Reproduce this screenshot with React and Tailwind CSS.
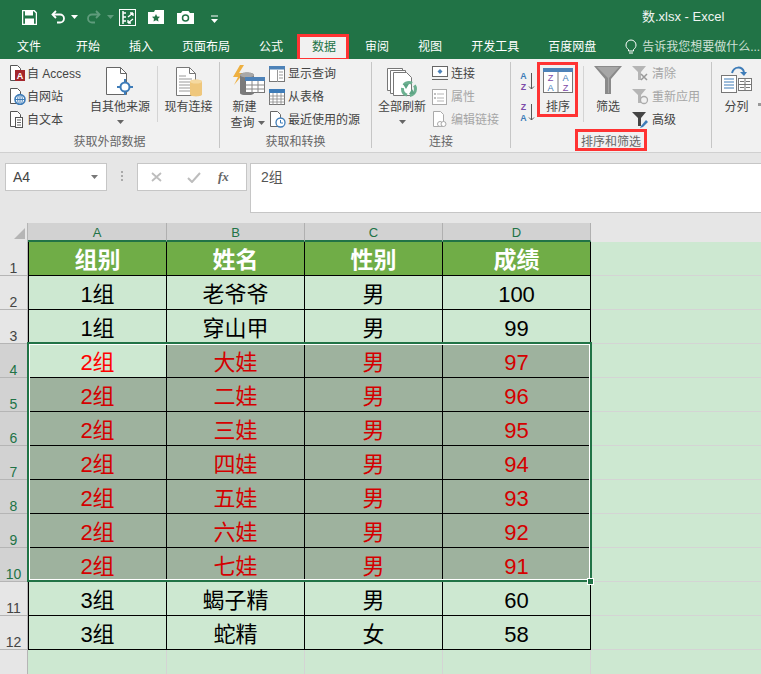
const Tri = ({ c = "#666", className = "" }) => (
  <svg width="7" height="4" viewBox="0 0 7 4" className={className}><path d="M0 0h7L3.500 4z" fill={c} /></svg>
);
const IconAccess = () => (
  <svg width="17" height="17" viewBox="0 0 17 17"><path d="M1.500.5h7l3 3v12h-10z" fill="#fff" stroke="#555" /><rect x="6" y="5" width="10" height="11" fill="#a4262c" /><text x="11" y="14" textAnchor="middle" fontSize="9" fontWeight="700" fill="#fff" fontFamily="Liberation Sans">A</text></svg>
);
const IconWeb = () => (
  <svg width="17" height="17" viewBox="0 0 17 17"><path d="M1.500.5h7l3 3v12h-10z" fill="#fff" stroke="#555" /><circle cx="11" cy="11.500" r="5" fill="#fff" stroke="#3e7cb8" strokeWidth="1.600" /><path d="M6 11.500h10M11 6.500v10" stroke="#3e7cb8" /><ellipse cx="11" cy="11.500" rx="2.300" ry="5" fill="none" stroke="#3e7cb8" /></svg>
);
const IconText = () => (
  <svg width="17" height="17" viewBox="0 0 17 17"><path d="M1.500.5h7l3 3v12h-10z" fill="#fff" stroke="#555" /><rect x="6.500" y="6.500" width="7" height="10" fill="#fff" stroke="#555" /><path d="M8 9h4M8 11.500h4M8 14h4" stroke="#666" /></svg>
);
const IconOther = () => (
  <svg width="30" height="30" viewBox="0 0 30 30"><path d="M1.500.5h14l6 6v21h-20z" fill="#fff" stroke="#666" /><path d="M15.500.5v6h6" fill="none" stroke="#666" /><circle cx="20" cy="20" r="4.500" fill="#fff" stroke="#3e7cb8" strokeWidth="2" /><path d="M20 12v4M20 24v4M12 20h4M24 20h4" stroke="#3e7cb8" strokeWidth="2" /></svg>
);
const IconExisting = () => (
  <svg width="28" height="30" viewBox="0 0 28 30"><path d="M1.500.5h13l6 6v22h-19z" fill="#fff" stroke="#777" /><path d="M14.500.5v6h6" fill="none" stroke="#777" /><path d="M4 9h7M4 12h13M4 15h13M4 18h13M4 21h13M4 24h13" stroke="#999" /><path d="M15 14.500c0-2.500 12-2.500 12 0v13c0 2.500-12 2.500-12 0z" fill="#efc77c" /><ellipse cx="21" cy="14.500" rx="6" ry="2" fill="#f5d9a0" /></svg>
);
const TableMini = ({ w = 16, h = 16, head = "#3e7cb8", rows = 3, cols = 3 }) => (
  <svg width={w} height={h} viewBox="0 0 16 16" className="shrink-0"><rect x=".5" y=".5" width="15" height="15" fill="#fff" stroke="#777" /><rect x="0" y="0" width="16" height="4" fill={head} />
    {Array.from({ length: rows - 1 }).map((_, i) => <path key={i} d={`M0 ${4 + ((i + 1) * 12) / rows}h16`} stroke="#888" strokeWidth=".8" />)}
    {Array.from({ length: cols - 1 }).map((_, i) => <path key={i} d={`M${((i + 1) * 16) / cols} 4v12`} stroke="#888" strokeWidth=".8" />)}
  </svg>
);
const IconQuery = () => (
  <svg width="34" height="30" viewBox="0 0 34 30"><path d="M9 0L2 12h5L3 20l10-12H8l5-8z" fill="#eeb041" /><path d="M9 10c0-3.500 14-3.500 14 0v18c0 3-14 3-14 0z" fill="#7b7b7b" /><ellipse cx="16" cy="10" rx="7" ry="2.500" fill="#a8a8a8" /><rect x="14.500" y="12.500" width="19" height="15" fill="#fff" stroke="#777" /><rect x="14" y="12" width="20" height="4" fill="#4d82b8" /><path d="M14.500 20h19M14.500 24h19M21 16v12M27 16v12" stroke="#888" /></svg>
);
const IconShowQuery = () => (
  <svg width="16" height="16" viewBox="0 0 16 16" className="shrink-0"><rect x=".5" y=".5" width="15" height="15" fill="#fff" stroke="#777" /><rect width="16" height="3.500" fill="#4d82b8" /><path d="M10 6h4M10 9h4M10 12h4" stroke="#999" /><path d="M8.500 4v12" stroke="#999" /></svg>
);
const IconRecent = () => (
  <svg width="17" height="17" viewBox="0 0 17 17" className="shrink-0"><path d="M1.500.5h7l3 3v12h-10z" fill="#fff" stroke="#666" /><circle cx="11.500" cy="11.500" r="4.500" fill="#fff" stroke="#3e7cb8" strokeWidth="1.300" /><path d="M11.500 9v3h2.500" fill="none" stroke="#3e7cb8" /></svg>
);
const IconRefresh = () => (
  <svg width="32" height="31" viewBox="0 0 32 31"><path d="M1.500 1.500h15v22h-15z" fill="#fff" stroke="#777" /><path d="M4.500 3.500h15v23h-15z" fill="#fff" stroke="#777" /><path d="M7.500 5.500h13l5 5v18h-18z" fill="#fff" stroke="#777" /><circle cx="23" cy="22" r="6.500" fill="none" stroke="#6cb090" strokeWidth="3" strokeDasharray="9 3" /><path d="M17 17l3 5 3-5zM29 27l-3-5-3 5z" fill="#5ea585" /></svg>
);
const IconConn = () => (
  <svg width="16" height="15" viewBox="0 0 16 15" className="shrink-0"><rect x=".5" y=".5" width="15" height="10" fill="#fff" stroke="#666" /><path d="M0 13.500h16" stroke="#666" /><path d="M8 3l2.500 2.500L8 8 5.500 5.500z" fill="#4d82b8" /></svg>
);
const IconProps = () => (
  <svg width="15" height="16" viewBox="0 0 15 16" className="shrink-0"><rect x=".5" y=".5" width="14" height="15" fill="#fff" stroke="#aaa" /><path d="M5 5h7M5 9h7M5 12h7" stroke="#b5b5b5" /><circle cx="3" cy="5" r="1" fill="#aaa" /><circle cx="3" cy="9" r="1" fill="#aaa" /></svg>
);
const IconEditLink = () => (
  <svg width="15" height="17" viewBox="0 0 15 17" className="shrink-0"><path d="M1.500.5h7l3 3v12h-10z" fill="#fff" stroke="#aaa" /><circle cx="8" cy="13" r="2.500" fill="#fff" stroke="#aaa" /><circle cx="11.500" cy="13" r="2.500" fill="#fff" stroke="#aaa" /></svg>
);
const Letters = ({ a, b, ca, cb }) => (
  <svg width="16" height="20" viewBox="0 0 16 20" className="shrink-0">
    <text x="4.500" y="8" textAnchor="middle" fontSize="8.800" fontWeight="700" fontFamily="Liberation Sans" fill={ca}>{a}</text>
    <text x="4.500" y="18.500" textAnchor="middle" fontSize="8.800" fontWeight="700" fontFamily="Liberation Sans" fill={cb}>{b}</text>
    <path d="M12.500 2v16M10 15.500l2.500 2.500 2.500-2.500" fill="none" stroke="#555" />
  </svg>
);
const IconSort = () => (
  <svg width="30" height="25" viewBox="0 0 30 25"><rect x=".5" y=".5" width="29" height="24" fill="#fff" stroke="#777" /><rect width="30" height="4" fill="#4d82b8" /><path d="M15 4v21" stroke="#777" />
    <g fontFamily="Liberation Sans" fontSize="9.200" textAnchor="middle"><text x="7.500" y="12.500" fill="#7d4ba8">Z</text><text x="7.500" y="23.300" fill="#3e7cb8">A</text><text x="22.500" y="12.500" fill="#3e7cb8">A</text><text x="22.500" y="23.300" fill="#7d4ba8">Z</text></g></svg>
);
const IconFunnel = () => (
  <svg width="28" height="28" viewBox="0 0 28 28"><path d="M0 0h28L17 13v15h-6V13z" fill="#8a8a8a" /><path d="M3 1h22L15 12v15h-1V12z" fill="#a6a6a6" /></svg>
);
const MiniFunnel = ({ children, c = "#b5b5b5" }) => (
  <svg width="17" height="17" viewBox="0 0 17 17" className="shrink-0"><path d="M0 1h14L9 7v8H6V7z" fill={c} />{children}</svg>
);
const IconSplit = () => (
  <svg width="31" height="27" viewBox="0 0 31 27"><path d="M11 7C13 0 21 0 23 6" fill="none" stroke="#3e7cb8" strokeWidth="2" /><path d="M19 6h7l-3 4z" fill="#3e7cb8" /><rect x=".5" y="9.500" width="15" height="17" fill="#fff" stroke="#777" /><path d="M3 13h10M3 16h10M3 19h10M3 22h10" stroke="#3e7cb8" /><rect x="17.500" y="12.500" width="13" height="12" fill="#fff" stroke="#777" /><path d="M17.500 18.500h13M24 12.500v12" stroke="#777" /><path d="M19 15.500h4M25 15.500h4M19 21.500h4M25 21.500h4" stroke="#777" /></svg>
);

const Small = ({ icon, children, dim, gap = "gap-[3px]" }) => (
  <div className={`flex items-center h-[23px] ${gap} whitespace-nowrap ${dim ? "text-[#a6a6a6]" : ""}`}>{icon}<span className="pt-[1px]">{children}</span></div>
);
const Group = ({ w, label, children }) => (
  <div className={`${w} h-[86px] border-r border-[#c6c6c6] flex flex-col`}>
    <div className="flex h-[74px]">{children}</div>
    <div className="mt-[2px] h-[12px] leading-[12px] text-center text-[#666]">{label}</div>
  </div>
);
const Divider = ({ cls }) => <div className={`w-px h-[56px] mt-[4px] bg-[#d4d4d4] ${cls}`} />;

const tabs = ["开始", "插入", "页面布局", "公式", "数据", "审阅", "视图", "开发工具", "百度网盘"];
const data = [
  ["1组", "老爷爷", "男", "100"],
  ["1组", "穿山甲", "男", "99"],
  ["2组", "大娃", "男", "97"],
  ["2组", "二娃", "男", "96"],
  ["2组", "三娃", "男", "95"],
  ["2组", "四娃", "男", "94"],
  ["2组", "五娃", "男", "93"],
  ["2组", "六娃", "男", "92"],
  ["2组", "七娃", "男", "91"],
  ["3组", "蝎子精", "男", "60"],
  ["3组", "蛇精", "女", "58"],
];

const RowHead = ({ n, sel }) => (
  <div className={`${sel ? "bg-[#d2d2d2] text-[#217346]" : "bg-[#e6e6e6] text-[#444]"} border-r border-b border-[#b5b5b5] flex items-end justify-center text-[14px] leading-[14px]`}>{n}</div>
);
const Blank = () => <div className="bg-[#cde8d1] border-b border-[#d4d4d4]" />;

export default function App() {
  return (
    <div className="relative w-[761px] h-[674px] overflow-hidden bg-[#e6e6e6] text-[12px] text-[#444] font-['Liberation_Sans','Noto_Sans_CJK_SC',sans-serif]">
      {/* Title bar */}
      <div className="h-[34px] bg-[#217346] flex items-center text-white relative">
        <div className="flex items-center pl-[22px]">
          <svg width="15" height="15" viewBox="0 0 15 15"><path d="M.5.5h11.500l2.500 2.500v11.500H.5z" fill="none" stroke="#fff" strokeWidth="1.500" /><rect x="3" y="1" width="8" height="4.500" fill="#fff" /><rect x="3" y="8.500" width="9" height="5.500" fill="#fff" /></svg>
          <svg width="15" height="14" viewBox="0 0 15 14" className="ml-[14px]"><path d="M5 1L1.500 4.500 5 8" fill="none" stroke="#fff" strokeWidth="1.800" /><path d="M2 4.500h7a4 4 0 0 1 0 8H6" fill="none" stroke="#fff" strokeWidth="1.800" /></svg>
          <Tri c="#fff" className="ml-[5px]" />
          <svg width="15" height="14" viewBox="0 0 15 14" className="ml-[8px]"><path d="M10 1l3.500 3.500L10 8" fill="none" stroke="#5f9c7c" strokeWidth="1.800" /><path d="M13 4.500H6a4 4 0 0 0 0 8h3" fill="none" stroke="#5f9c7c" strokeWidth="1.800" /></svg>
          <Tri c="#5f9c7c" className="ml-[6px]" />
          <svg width="17" height="17" viewBox="0 0 17 17" className="ml-[5px]"><rect x=".5" y=".5" width="16" height="16" fill="none" stroke="#fff" /><path d="M4 2v13M4 4h3M4 8h3M4 12h3" stroke="#fff" strokeWidth="1.500" /><path d="M9 8l5-4M14 4h-3M14 4v3M14 10l-5 4M9 14h3M9 14v-3" stroke="#fff" strokeWidth="1.300" fill="none" /></svg>
          <svg width="17" height="16" viewBox="0 0 17 16" className="ml-[12px]"><path d="M0 3h6l1-2h9v14H0z" fill="#fff" /><path d="M8 5l1.200 2.500 2.800.3-2 2 .5 2.700L8 11.200 5.500 12.500 6 9.800l-2-2 2.800-.3z" fill="#217346" /></svg>
          <svg width="17" height="14" viewBox="0 0 17 14" className="ml-[12px]"><path d="M0 3h4l1.500-2h6L13 3h4v11H0z" fill="#fff" /><circle cx="8.500" cy="8" r="3" fill="none" stroke="#217346" strokeWidth="1.500" /></svg>
          <svg width="7" height="8" viewBox="0 0 7 8" className="ml-[17px] mt-[3px]"><path d="M0 1h7" stroke="#fff" /><path d="M0 4h7L3.500 8z" fill="#fff" /></svg>
        </div>
        <div className="absolute left-[642px] top-[8px] text-[13px] leading-[17px] text-[#f0f5f2] whitespace-nowrap">数.xlsx - Excel</div>
      </div>
      {/* Tabs */}
      <div className="h-[25px] bg-[#217346] flex items-center pl-[17px] text-white whitespace-nowrap">
        <span className="mr-[35px]">文件</span>
        <div className="flex gap-[29px] items-center">
          {tabs.map((t) => (
            <div key={t} className={`relative ${t === "数据" ? "text-[#217346]" : ""}`}>
              {t === "数据" && <div className="absolute left-[-15px] top-[-4px] w-[52px] h-[27px] bg-[#f1f1f1] border-[3px] border-[#ff3333]" />}
              <span className="relative">{t}</span>
            </div>
          ))}
        </div>
        <svg width="12" height="16" viewBox="0 0 12 16" className="ml-[29px] shrink-0"><path d="M3.500 10.500C2 9.500 1 8 1 6a5 5 0 0 1 10 0c0 2-1 3.500-2.500 4.500v1.500h-5zM4 14h4" fill="none" stroke="#fff" /></svg>
        <span className="ml-[5px] text-[#cfe0d6]">告诉我您想要做什么...</span>
      </div>
      {/* Ribbon */}
      <div className="relative h-[94px] bg-[#f1f1f1] border-b border-[#d0d0d0] pt-[3px] flex">
        <Group w="w-[220px]" label="获取外部数据">
          <div className="w-[88px] pl-[9px]">
            <Small icon={<IconAccess />} gap="gap-[1px]">自 Access</Small>
            <Small icon={<IconWeb />} gap="gap-[1px]">自网站</Small>
            <Small icon={<IconText />} gap="gap-[1px]">自文本</Small>
          </div>
          <div className="w-[64px] flex flex-col items-center pt-[5px]">
            <div className="h-[29px]"><IconOther /></div>
            <div className="mt-[4px] h-[14px] leading-[14px] whitespace-nowrap">自其他来源</div>
            <Tri className="mt-[6px]" />
          </div>
          <Divider cls="ml-[5px]" />
          <div className="w-[61px] flex flex-col items-center pt-[5px]">
            <div className="h-[29px]"><IconExisting /></div>
            <div className="mt-[4px] h-[14px] leading-[14px] whitespace-nowrap">现有连接</div>
          </div>
        </Group>
        <Group w="w-[152px]" label="获取和转换">
          <div className="w-[49px] flex flex-col items-center pt-[3px]">
            <div className="h-[31px] ml-[6px]"><IconQuery /></div>
            <div className="mt-[4px] h-[14px] leading-[14px]">新建</div>
            <div className="mt-[2px] h-[14px] leading-[14px] flex items-center gap-[3px] ml-[6px] whitespace-nowrap">查询<Tri /></div>
          </div>
          <div>
            <Small icon={<IconShowQuery />}>显示查询</Small>
            <Small icon={<TableMini head="#3e7cb8" rows={4} cols={4} />}>从表格</Small>
            <Small icon={<IconRecent />} gap="gap-[2px]">最近使用的源</Small>
          </div>
        </Group>
        <Group w="w-[139px]" label="连接">
          <div className="w-[60px] flex flex-col items-center pt-[5px]">
            <div className="h-[29px]"><IconRefresh /></div>
            <div className="mt-[4px] h-[14px] leading-[14px] whitespace-nowrap">全部刷新</div>
            <Tri className="mt-[6px]" />
          </div>
          <div>
            <Small icon={<IconConn />} gap="gap-[3px]">连接</Small>
            <Small icon={<IconProps />} dim gap="gap-[4px]">属性</Small>
            <Small icon={<IconEditLink />} dim gap="gap-[4px]">编辑链接</Small>
          </div>
        </Group>
        <Group w="w-[201px]" label={
          <span className="relative inline-block">
            <span className="absolute left-[-6px] top-[-7px] w-[72px] h-[22px] border-[3px] border-[#ff3333]" />
            排序和筛选
          </span>
        }>
          <div className="w-[29px] pl-[8px] pt-[9px] flex flex-col gap-[11px]">
            <Letters a="A" b="Z" ca="#3e7cb8" cb="#7d4ba8" />
            <Letters a="Z" b="A" ca="#7d4ba8" cb="#3e7cb8" />
          </div>
          <div className="relative w-[36px] flex flex-col items-center pt-[6px]">
            <div className="absolute left-[-3px] top-0 w-[41px] h-[55px] border-[3px] border-[#ff3333]" />
            <div className="h-[28px]"><IconSort /></div>
            <div className="mt-[4px] h-[14px] leading-[14px] whitespace-nowrap">排序</div>
          </div>
          <Divider cls="ml-[7px]" />
          <div className="w-[48px] flex flex-col items-center pt-[4px]">
            <div className="h-[30px]"><IconFunnel /></div>
            <div className="mt-[4px] h-[14px] leading-[14px] whitespace-nowrap">筛选</div>
          </div>
          <div>
            <Small dim icon={<MiniFunnel><path d="M9 9l6 6M15 9l-6 6" stroke="#999" strokeWidth="1.500" /></MiniFunnel>}>清除</Small>
            <Small dim icon={<MiniFunnel><circle cx="12" cy="12" r="3.500" fill="none" stroke="#aaa" strokeWidth="1.300" /></MiniFunnel>}>重新应用</Small>
            <Small icon={<MiniFunnel c="#444"><path d="M9 15l5-6 2 2-5 5-3 1z" fill="#3e7cb8" /></MiniFunnel>}>高级</Small>
          </div>
        </Group>
        <div className="w-[49px] h-[86px] flex">
          <div className="w-[50px] flex flex-col items-center pt-[4px]">
            <div className="h-[30px]"><IconSplit /></div>
            <div className="mt-[4px] h-[14px] leading-[14px] whitespace-nowrap">分列</div>
          </div>
        </div>
        <div className="absolute left-[758px] top-[44px] w-[3px] h-[3px] bg-[#999]" />
      </div>
      {/* Formula bar */}
      <div className="h-[70px] pt-[10px] flex items-start bg-[#e6e6e6]">
        <div className="ml-[5px] w-[102px] h-[28px] bg-white border border-[#c6c6c6] flex items-center justify-between pl-[7px] pr-[8px] text-[14px]">
          <span>A4</span><Tri c="#777" />
        </div>
        <div className="ml-[14px] mt-[8px] w-[2px] h-[10px] border-l-2 border-dotted border-[#aaa]" />
        <div className="ml-[14px] w-[110px] h-[28px] bg-white border border-[#c6c6c6] flex items-center">
          <svg width="14" height="12" viewBox="0 0 14 12" className="ml-[12px]"><path d="M2 2l9 8M11 2l-9 8" stroke="#bdbdbd" strokeWidth="1.800" /></svg>
          <svg width="14" height="12" viewBox="0 0 14 12" className="ml-[23px]"><path d="M1 7l4 4 8-9" fill="none" stroke="#bdbdbd" strokeWidth="2" /></svg>
          <span className="ml-[17px] text-[13px] italic font-bold text-[#666] font-['Liberation_Serif',serif]">fx</span>
        </div>
        <div className="ml-[3px] flex-1 h-[50px] bg-white border border-[#c6c6c6] border-r-0 pl-[10px] pt-[4px] text-[14px] leading-[18px] text-[#555]">2组</div>
      </div>
      {/* Sheet */}
      <div className="relative grid grid-cols-[28px_139px_138px_138px_148px_1fr] grid-rows-[19px] auto-rows-[34px]">
        <div className="bg-[#e6e6e6] border-r border-[#b5b5b5] relative">
          <svg width="11" height="11" viewBox="0 0 11 11" className="absolute left-[14px] top-[5px]"><path d="M11 0v11H0z" fill="#b5b5b5" /></svg>
        </div>
        {["A", "B", "C", "D"].map((c) => (
          <div key={c} className="bg-[#d2d2d2] border-r border-[#b0b0b0] border-b-2 border-b-[#217346] text-center text-[13px] leading-[19px] text-[#217346]">{c}</div>
        ))}
        <div className="bg-[#e6e6e6]" />
        <RowHead n={1} />
        {["组别", "姓名", "性别", "成绩"].map((h, i) => (
          <div key={h} className={`bg-[#70ad47] border-r border-b border-black ${i === 0 ? "border-l" : ""} flex items-center justify-center pt-[3px] text-white font-bold text-[23px]`}>{h}</div>
        ))}
        <Blank />
        {data.map((row, r) => {
          const sel = r >= 2 && r <= 8;
          return [
            <RowHead key={`h${r}`} n={r + 2} sel={sel} />,
            ...row.map((v, c) => {
              const gray = sel && !(r === 2 && c === 0);
              return (
                <div key={`${r}-${c}`} className={`${gray ? "bg-[#9eb29e]" : "bg-[#cde8d1]"} border-r border-b border-black ${c === 0 ? "border-l" : ""} flex items-center justify-center pt-[3px] text-[22px] ${sel ? (gray ? "text-[#d40000]" : "text-[#ff0000]") : "text-black"}`}>{v}</div>
              );
            }),
            <Blank key={`b${r}`} />,
          ];
        })}
        <div className="bg-[#e6e6e6] border-r border-[#b5b5b5]" />
        <div className="bg-[#cde8d1] border-r border-[#d4d4d4]" />
        <div className="bg-[#cde8d1] border-r border-[#d4d4d4]" />
        <div className="bg-[#cde8d1] border-r border-[#d4d4d4]" />
        <div className="bg-[#cde8d1] border-r border-[#d4d4d4]" />
        <div className="bg-[#cde8d1]" />
        {/* Selection */}
        <div className="absolute left-[27px] top-[119px] w-[565px] h-[240px] border-2 border-[#217346] shadow-[inset_0_0_0_1px_#fff]" />
        <div className="absolute left-[587px] top-[355px] w-[7px] h-[7px] bg-[#217346] border border-white" />
      </div>
    </div>
  );
}
